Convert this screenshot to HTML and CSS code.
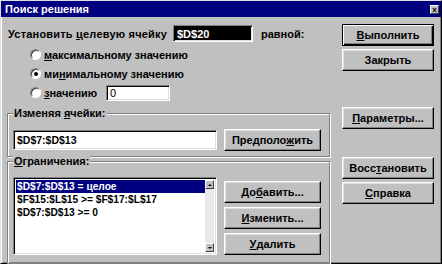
FILE: index.html
```html
<!DOCTYPE html>
<html>
<head>
<meta charset="utf-8">
<link rel="stylesheet" href="styles.css">
</head>
<body>
<div class="win">
  <div class="title"><span class="title-text">Поиск решения</span><span class="close">x</span></div>
  <div class="main">
    <div class="left">
      <div class="target-row">
        <span class="target-label">Установить <u>ц</u>елевую ячейку</span>
        <span class="field field-sel">$D$20</span>
        <span class="eq">равной:</span>
      </div>
      <div class="radios">
        <div class="radio"><span class="dot"></span><span><u>м</u>аксимальному значению</span></div>
        <div class="radio"><span class="dot on"></span><span>ми<u>н</u>имальному значению</span></div>
        <div class="radio"><span class="dot"></span><span class="val-label"><u>з</u>начению</span><span class="field field-val">0</span></div>
      </div>
      <div class="group g1">
        <div class="legend">Изменяя <u>я</u>чейки:</div>
        <div class="grow">
          <span class="field field-wide">$D$7:$D$13</span>
          <span class="btn">Предполо<u>ж</u>ить</span>
        </div>
      </div>
      <div class="group g2">
        <div class="legend"><u>О</u>граничения:</div>
        <div class="grow grow-top">
          <div class="listbox">
            <div class="items">
              <div class="item sel">$D$7:$D$13 = целое</div>
              <div class="item">$F$15:$L$15 &gt;= $F$17:$L$17</div>
              <div class="item">$D$7:$D$13 &gt;= 0</div>
            </div>
            <div class="sbar">
              <span class="sbtn"><span class="arr up"></span></span>
              <span class="strack"></span>
              <span class="sbtn"><span class="arr down"></span></span>
            </div>
          </div>
          <div class="btn-col">
            <span class="btn">До<u>б</u>авить...</span>
            <span class="btn"><u>И</u>зменить...</span>
            <span class="btn"><u>У</u>далить</span>
          </div>
        </div>
      </div>
    </div>
    <div class="right">
      <span class="btn def"><u>В</u>ыполнить</span>
      <span class="btn b-close">Закрыть</span>
      <span class="btn b-params"><u>П</u>араметры...</span>
      <span class="btn b-restore">Восс<u>т</u>ановить</span>
      <span class="btn b-help"><u>С</u>правка</span>
    </div>
  </div>
</div>
</body>
</html>
```
FILE: styles.css
```css
body {
  margin: 0;
  font: bold 11px "Liberation Sans", Arial, sans-serif;
  color: #000;
}
.win {
  width: 442px;
  height: 264px;
  box-sizing: border-box;
  background: #c0c0c0;
  border: 1px solid;
  border-color: #dfdfdf #000 #000 #dfdfdf;
  box-shadow: inset 1px 1px #fff, inset -1px -1px #808080;
}
.title {
  height: 16px;
  background: #000080;
  color: #fff;
  display: flex;
  align-items: center;
  justify-content: space-between;
  padding: 0 2px 0 4px;
}
.close {
  width: 9px;
  height: 9px;
  box-sizing: border-box;
  background: #c0c0c0;
  color: #000;
  font-size: 8px;
  line-height: 7px;
  text-align: center;
  border: 1px solid;
  border-color: #fff #404040 #404040 #fff;
}
.main {
  display: flex;
  padding: 7px 0 0 6px;
}
.left {
  width: 323px;
}
.right {
  width: 92px;
  margin-left: 12px;
  display: flex;
  flex-direction: column;
}
.target-row {
  height: 19px;
  display: flex;
  align-items: center;
}
.target-label {
  width: 166px;
  padding-left: 1px;
  box-sizing: border-box;
  letter-spacing: 0.2px;
}
.field {
  box-sizing: border-box;
  height: 17px;
  background: #fff;
  border: 1px solid;
  border-color: #808080 #fff #fff #808080;
  box-shadow: inset 1px 1px #000, inset -1px -1px #dfdfdf;
  display: flex;
  align-items: center;
  padding-left: 3px;
}
.field-sel {
  width: 80px;
  background: #000;
  color: #fff;
}
.eq {
  margin-left: 8px;
}
.radios {
  margin-top: 2px;
}
.radio {
  height: 19px;
  display: flex;
  align-items: center;
  padding-left: 23px;
}
.dot {
  width: 11px;
  height: 11px;
  box-sizing: border-box;
  border-radius: 50%;
  background: #fff;
  border: 1px solid;
  border-color: #808080 #fff #fff #808080;
  box-shadow: inset 1px 1px #404040;
  margin-right: 3px;
  display: flex;
  align-items: center;
  justify-content: center;
}
.dot.on::after {
  content: "";
  width: 4px;
  height: 4px;
  border-radius: 50%;
  background: #000;
}
.val-label {
  width: 62px;
}
.field-val {
  width: 64px;
  height: 16px;
  font-weight: normal;
}
.group {
  box-sizing: border-box;
  border: 1px solid #808080;
  box-shadow: inset 1px 1px #fff, 1px 1px #fff;
  padding: 0 8px 0 5px;
}
.legend {
  display: inline-block;
  height: 13px;
  line-height: 13px;
  margin-top: -7px;
  padding: 0 1px;
  background: #c0c0c0;
  vertical-align: top;
}
.g1 {
  margin-top: 11px;
  padding-bottom: 5px;
}
.g2 {
  margin-top: 4px;
  padding-bottom: 8px;
}
.grow {
  display: grid;
  grid-template-columns: 204px 97px;
  column-gap: 7px;
  margin-top: 3px;
  align-items: center;
}
.grow-top {
  align-items: start;
}
.field-wide {
  height: 20px;
  font-size: 10.5px;
}
.btn {
  box-sizing: border-box;
  height: 22px;
  background: #c0c0c0;
  border: 1px solid;
  border-color: #fff #000 #000 #fff;
  box-shadow: inset -1px -1px #808080, inset 1px 1px #dfdfdf;
  display: flex;
  align-items: center;
  justify-content: center;
}
.btn.def {
  border: 1px solid #000;
  box-shadow: inset 1px 1px #fff, inset -1px -1px #000, inset -2px -2px #808080;
}
.b-close { margin-top: 3px; }
.b-params { margin-top: 36px; }
.b-restore { margin-top: 28px; }
.b-help { margin-top: 3px; }
.btn-col {
  display: flex;
  flex-direction: column;
  gap: 4px;
  margin-top: 4px;
}
.listbox {
  box-sizing: border-box;
  height: 78px;
  background: #fff;
  border: 1px solid;
  border-color: #808080 #fff #fff #808080;
  box-shadow: inset 1px 1px #000, inset -1px -1px #dfdfdf;
  display: flex;
  padding: 2px;
}
.items {
  flex: 1;
}
.item {
  height: 13px;
  line-height: 13px;
  padding-left: 1px;
  white-space: nowrap;
  font-size: 10.2px;
}
.item.sel {
  background: #000080;
  color: #fff;
}
.sbar {
  width: 9px;
  display: flex;
  flex-direction: column;
}
.sbtn {
  box-sizing: border-box;
  height: 9px;
  background: #c0c0c0;
  border: 1px solid;
  border-color: #fff #404040 #404040 #fff;
  display: flex;
  align-items: center;
  justify-content: center;
}
.strack {
  flex: 1;
  background: #e8e8e8;
}
.arr {
  width: 0;
  height: 0;
  border-left: 2px solid transparent;
  border-right: 2px solid transparent;
}
.arr.up { border-bottom: 2px solid #000; }
.arr.down { border-top: 2px solid #000; }
```
